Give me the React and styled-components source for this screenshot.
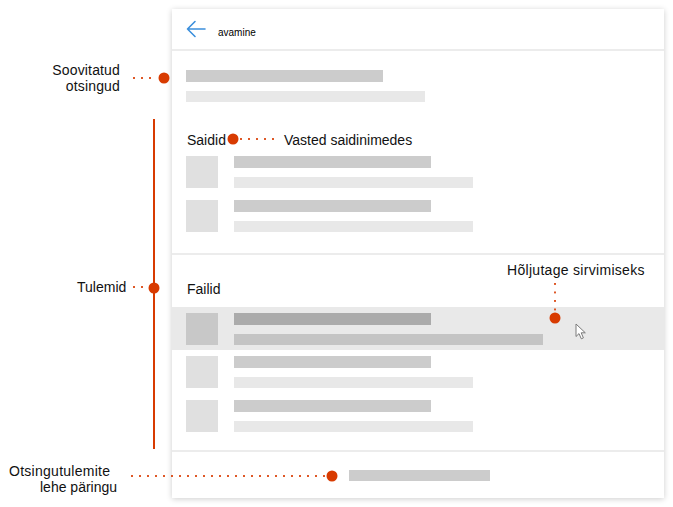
import styled, { createGlobalStyle } from "styled-components";

const GlobalStyle = createGlobalStyle`
    body {
        margin: 0;
        background: #ffffff;
        font-family: "Liberation Sans", Arial, sans-serif;
    }
`;

const ORANGE = "#d83b01";

const Page = styled.div`
    position: relative;
    width: 673px;
    height: 507px;
    padding: 9px 0 0 172px;
    box-sizing: border-box;
    background: #ffffff;
    font-family: "Liberation Sans", Arial, sans-serif;
    color: #111111;
`;

const Panel = styled.div`
    width: 492px;
    height: 489px;
    background: #ffffff;
    box-shadow: 0 1px 6px rgba(0, 0, 0, 0.2);
    display: flex;
    flex-direction: column;
`;

const Header = styled.div`
    height: 40px;
    flex-shrink: 0;
    display: flex;
    align-items: center;
    padding-left: 14px;
    border-bottom: 2px solid #ececec;
`;

const BackIcon = styled.svg`
    width: 20px;
    height: 18px;
    flex-shrink: 0;
`;

const Query = styled.span`
    align-self: flex-end;
    margin: 0 0 10px 12px;
    font-size: 10px;
    line-height: 12px;
    color: #000000;
`;

const Section = styled.div`
    display: flex;
    flex-direction: column;
    padding: ${(p) => p.$pad};
    border-bottom: 2px solid #ececec;
`;

const Stack = styled.div`
    display: flex;
    flex-direction: column;
    gap: ${(p) => p.$gap}px;
    margin-top: ${(p) => p.$top || 0}px;
    padding: 0 ${(p) => p.$side || 0}px;
`;

const Heading = styled.div`
    height: 20px;
    font-size: 14px;
    line-height: 20px;
    padding-left: ${(p) => p.$side || 0}px;
`;

const Bar = styled.div`
    width: ${(p) => p.$w}px;
    height: ${(p) => p.$h}px;
    background: ${(p) => p.$c};
`;

const Row = styled.div`
    display: flex;
    gap: 16px;
    padding: ${(p) => (p.$hover ? "6px 14px 5px" : "0 14px")};
    margin-top: ${(p) => p.$top || 0}px;
    background: ${(p) => (p.$hover ? "#e9e9e9" : "transparent")};
`;

const Thumb = styled.div`
    width: 32px;
    height: 32px;
    background: ${(p) => (p.$hover ? "#c8c8c8" : "#e0e0e0")};
`;

const Lines = styled.div`
    display: flex;
    flex-direction: column;
    gap: 9px;
`;

const Footer = styled.div`
    flex: 1;
    display: flex;
    align-items: center;
    padding-left: 177px;
`;

/* callouts drawn over the page */

const Note = styled.div`
    position: absolute;
    left: ${(p) => p.$x}px;
    top: ${(p) => p.$y}px;
    width: ${(p) => (p.$w ? `${p.$w}px` : "auto")};
    text-align: ${(p) => p.$align || "left"};
    font-size: 14px;
    line-height: 16px;
    letter-spacing: ${(p) => p.$ls || 0}px;
    white-space: nowrap;
    color: #111111;
`;

const Indent = styled.span`
    display: block;
    padding-left: ${(p) => p.$by}px;
    letter-spacing: 0;
`;

const HDots = styled.div`
    position: absolute;
    left: ${(p) => p.$x}px;
    top: ${(p) => p.$y}px;
    width: ${(p) => p.$w}px;
    height: 2px;
    background-image: linear-gradient(to right, ${ORANGE} 0 2px, transparent 2px 8px);
    background-size: 8px 2px;
    opacity: 0.85;
`;

const VDots = styled.div`
    position: absolute;
    left: ${(p) => p.$x}px;
    top: ${(p) => p.$y}px;
    width: 2px;
    height: ${(p) => p.$h}px;
    background-image: linear-gradient(to bottom, ${ORANGE} 0 2px, transparent 2px 8.5px);
    background-size: 2px 8.5px;
    opacity: 0.85;
`;

const Dot = styled.div`
    position: absolute;
    left: ${(p) => p.$x}px;
    top: ${(p) => p.$y}px;
    width: 11px;
    height: 11px;
    border-radius: 50%;
    background: ${ORANGE};
    transform: translate(-50%, -50%);
`;

const Rail = styled.div`
    position: absolute;
    left: 153px;
    top: 119px;
    width: 2px;
    height: 330px;
    background: ${ORANGE};
`;

const Pointer = styled.svg`
    position: absolute;
    left: 575px;
    top: 323px;
    width: 12px;
    height: 17px;
`;

const Item = ({ hover, top, wide }) => (
    <Row $hover={hover} $top={top}>
        <Thumb $hover={hover} />
        <Lines>
            <Bar $w={197} $h={12} $c={hover ? "#ababab" : "#cccccc"} />
            <Bar $w={wide ? 309 : 239} $h={11} $c={hover ? "#c4c4c4" : "#e8e8e8"} />
        </Lines>
    </Row>
);

const App = () => {
    return (
        <Page>
            <GlobalStyle />
            <Panel>
                <Header>
                    <BackIcon viewBox="0 0 20 18" fill="none" stroke="#3b8fdc" strokeWidth="1.6" strokeLinecap="round" strokeLinejoin="round">
                        <path d="M19 9H1.5M9 1.5L1.5 9L9 16.5" />
                    </BackIcon>
                    <Query>avamine</Query>
                </Header>

                <Section $pad="19px 0 21px">
                    <Stack $gap={9} $side={14}>
                        <Bar $w={197} $h={12} $c="#cccccc" />
                        <Bar $w={239} $h={11} $c="#e8e8e8" />
                    </Stack>
                    <Stack $gap={0} $top={28} $side={15}>
                        <Heading>Saidid</Heading>
                    </Stack>
                    <Stack $gap={12} $top={6}>
                        <Item />
                        <Item />
                    </Stack>
                </Section>

                <Section $pad="24px 0 18px">
                    <Heading $side={15}>Failid</Heading>
                    <Item hover wide top={8} />
                    <Stack $gap={12} $top={6}>
                        <Item />
                        <Item />
                    </Stack>
                </Section>

                <Footer>
                    <Bar $w={141} $h={11} $c="#cccccc" />
                </Footer>
            </Panel>

            <Note $x={40} $y={62} $w={80} $align="right" $ls={0.15}>
                Soovitatud
                <br />
                otsingud
            </Note>
            <HDots $x={133} $y={77} $w={24} />
            <Dot $x={164} $y={77.5} />

            <Rail />
            <Note $x={77} $y={279}>Tulemid</Note>
            <HDots $x={133} $y={286} $w={18} />
            <Dot $x={154} $y={287.5} />

            <Dot $x={232.5} $y={138.5} />
            <HDots $x={240} $y={138} $w={38} />
            <Note $x={284} $y={132}>Vasted saidinimedes</Note>

            <Note $x={507} $y={262} $ls={0.3}>Hõljutage sirvimiseks</Note>
            <VDots $x={554} $y={283} $h={28} />
            <Dot $x={555} $y={318} />

            <Pointer viewBox="0 0 12 17">
                <path d="M1 1V13.5L4 10.6L6.3 15.8L8.4 14.9L6.2 9.8H10.3Z" fill="#ffffff" stroke="#7a7a7a" strokeWidth="1" strokeLinejoin="round" />
            </Pointer>

            <Note $x={9} $y={463} $ls={0.27}>
                Otsingutulemite
                <Indent $by={31}>lehe päringu</Indent>
            </Note>
            <HDots $x={131} $y={475} $w={196} />
            <Dot $x={332} $y={476} />
        </Page>
    );
};

export default App;
